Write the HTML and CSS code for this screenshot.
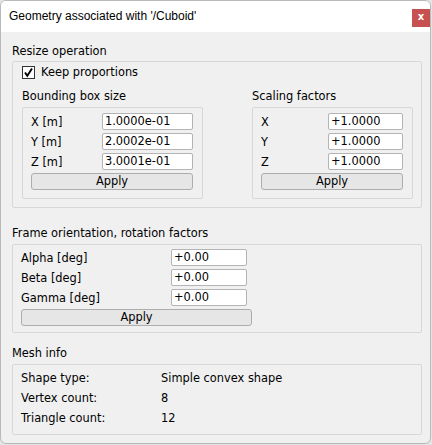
FILE: index.html
```html
<!DOCTYPE html>
<html>
<head>
<meta charset="utf-8">
<link rel="stylesheet" href="styles.css">
</head>
<body>
<div class="window">
  <div class="titlebar">
    <span class="title">Geometry associated with '/Cuboid'</span>
    <span class="close">x</span>
  </div>
  <div class="content">
    <div class="label sec1">Resize operation</div>
    <div class="box resize">
      <div class="checkrow">
        <span class="checkbox"><svg width="11" height="11" viewBox="0 0 11 11"><path d="M2 5.5 L4.3 8.8 L9 1.5" fill="none" stroke="#000" stroke-width="1.9"/></svg></span>
        <span>Keep proportions</span>
      </div>
      <div class="cols">
        <div class="col left">
          <div class="label sub">Bounding box size</div>
          <div class="box inner">
            <div class="row"><span class="lbl">X [m]</span><span class="input w91">1.0000e-01</span></div>
            <div class="row"><span class="lbl">Y [m]</span><span class="input w91">2.0002e-01</span></div>
            <div class="row"><span class="lbl">Z [m]</span><span class="input w91">3.0001e-01</span></div>
            <div class="btn">Apply</div>
          </div>
        </div>
        <div class="col right">
          <div class="label sub">Scaling factors</div>
          <div class="box inner">
            <div class="row"><span class="lbl">X</span><span class="input w75">+1.0000</span></div>
            <div class="row"><span class="lbl">Y</span><span class="input w75">+1.0000</span></div>
            <div class="row"><span class="lbl">Z</span><span class="input w75">+1.0000</span></div>
            <div class="btn">Apply</div>
          </div>
        </div>
      </div>
    </div>

    <div class="label sec2">Frame orientation, rotation factors</div>
    <div class="box frame">
      <div class="frow"><span class="lbl">Alpha [deg]</span><span class="input w76">+0.00</span></div>
      <div class="frow"><span class="lbl">Beta [deg]</span><span class="input w76">+0.00</span></div>
      <div class="frow"><span class="lbl">Gamma [deg]</span><span class="input w76">+0.00</span></div>
      <div class="btn fbtn">Apply</div>
    </div>

    <div class="label sec3">Mesh info</div>
    <div class="box mesh">
      <div class="mrow"><span class="mk">Shape type:</span><span>Simple convex shape</span></div>
      <div class="mrow"><span class="mk">Vertex count:</span><span>8</span></div>
      <div class="mrow"><span class="mk">Triangle count:</span><span>12</span></div>
    </div>
  </div>
</div>
</body>
</html>
```
FILE: styles.css
```css
html, body {
  margin: 0;
  padding: 0;
  background: #e4e4e4;
}
body {
  font-family: "DejaVu Sans", Verdana, sans-serif;
  font-size: 11.4px;
  color: #000;
}
.window {
  width: 429px;
  height: 442px;
  border: 1px solid #b9b9b9;
  border-radius: 6px;
  background: #f0f0f0;
  overflow: hidden;
  display: flex;
  flex-direction: column;
}
.titlebar {
  height: 31px;
  flex: none;
  background: #fff;
  display: flex;
  align-items: center;
  justify-content: space-between;
  padding: 0 0 1px 8px;
  box-sizing: border-box;
}
.title {
  font-family: "Liberation Sans", Arial, sans-serif;
  font-size: 12px;
  color: #000;
}
.close {
  width: 18px;
  height: 18px;
  background: #c75050;
  color: #fff;
  font-family: "DejaVu Sans", sans-serif;
  font-weight: bold;
  font-size: 10px;
  line-height: 16px;
  text-align: center;
  margin-top: 3px;
}
.content {
  padding: 11px 0 0 11px;
  display: flex;
  flex-direction: column;
}
.label {
  height: 16px;
  line-height: 16px;
  white-space: nowrap;
}
.sec1 { margin-bottom: 2px; }
.sec2 { margin-top: 17px; margin-bottom: 3px; }
.sec3 { margin-top: 12px; margin-bottom: 3px; }
.box {
  border: 1px solid #d7d7d7;
  border-radius: 2px;
  box-sizing: border-box;
}
.resize {
  width: 410px;
  padding: 1px 9px 8px 9px;
}
.checkrow {
  height: 18px;
  display: flex;
  align-items: center;
  gap: 6px;
}
.checkbox {
  width: 13px;
  height: 13px;
  box-sizing: border-box;
  border: 1px solid #333;
  background: #fff;
  display: flex;
  align-items: center;
  justify-content: center;
}
.cols {
  display: flex;
  gap: 49px;
  margin-top: 7px;
}
.col { display: flex; flex-direction: column; }
.col .sub { margin-bottom: 3px; }
.left .inner { width: 181px; }
.right .inner { width: 161px; }
.inner {
  padding: 5px 9px 8px 8px;
  display: flex;
  flex-direction: column;
  gap: 3px;
}
.row, .frow {
  height: 17px;
  display: flex;
  align-items: center;
  justify-content: space-between;
}
.lbl { white-space: nowrap; }
.input {
  height: 17px;
  box-sizing: border-box;
  background: #fff;
  border: 1px solid #b4b4b4;
  border-radius: 2px;
  padding-left: 2px;
  line-height: 15px;
  white-space: nowrap;
}
.w91 { width: 91px; }
.w75 { width: 75px; }
.w76 { width: 76px; }
.btn {
  height: 17px;
  box-sizing: border-box;
  background: #e6e6e6;
  border: 1px solid #adadad;
  border-radius: 3px;
  text-align: center;
  line-height: 15px;
}
.frame {
  width: 410px;
  padding: 4px 8px 6px 8px;
  display: flex;
  flex-direction: column;
  gap: 3px;
}
.frow { width: 226px; }
.fbtn { width: 231px; }
.mesh {
  width: 410px;
  height: 71px;
  padding: 3px 8px 0 8px;
}
.mrow {
  height: 20px;
  line-height: 20px;
  display: flex;
}
.mk { width: 140px; }
```
